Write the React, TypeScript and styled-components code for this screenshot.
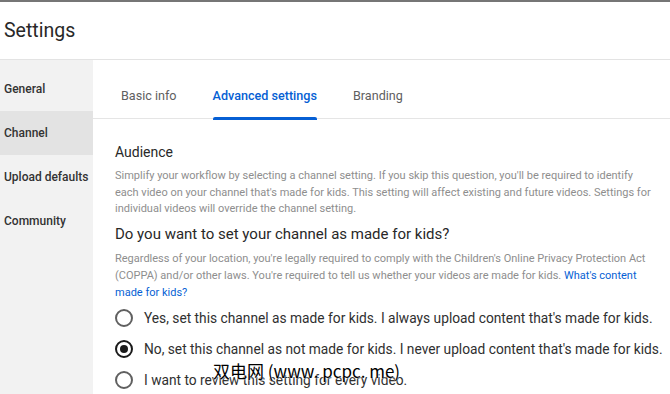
import React from "react";
import styled, { createGlobalStyle } from "styled-components";

const GlobalStyle = createGlobalStyle`
    html, body {
        margin: 0;
        padding: 0;
        background: #ffffff;
        overflow: hidden;
    }
    body {
        font-family: Roboto, "Liberation Sans", sans-serif;
        color: #282828;
    }
`;

const Page = styled.div`
    position: relative;
    width: 670px;
    height: 394px;
    border-top: 2px solid #767676;
    box-sizing: border-box;
    display: flex;
    flex-direction: column;
    overflow: hidden;
`;

const Header = styled.div`
    height: 58px;
    display: flex;
    align-items: center;
    padding-left: 4px;
    border-bottom: 1px solid #e3e3e3;
    font-size: 19.5px;
    color: #282828;
    box-sizing: border-box;
`;

const Body = styled.div`
    flex: 1;
    display: flex;
`;

const Sidebar = styled.nav`
    width: 93px;
    background: #f2f2f2;
    padding-top: 7px;
    display: flex;
    flex-direction: column;
`;

const NavItem = styled.div<{ $active?: boolean }>`
    height: 44px;
    display: flex;
    align-items: center;
    padding-left: 4px;
    font-size: 12px;
    font-weight: 500;
    color: #333333;
    background: ${(p) => (p.$active ? "#e3e3e3" : "transparent")};
`;

const Main = styled.div`
    flex: 1;
    display: flex;
    flex-direction: column;
`;

const Tabs = styled.div`
    display: flex;
    gap: 36px;
    padding-left: 28px;
    height: 59px;
    border-bottom: 1px solid #e5e5e5;
    box-sizing: border-box;
`;

const Tab = styled.div<{ $active?: boolean }>`
    position: relative;
    display: flex;
    align-items: center;
    padding-top: 11px;
    height: 48px;
    font-size: 12.6px;
    font-weight: ${(p) => (p.$active ? 500 : 400)};
    color: ${(p) => (p.$active ? "#065fd4" : "#606060")};

    &::after {
        content: "";
        display: ${(p) => (p.$active ? "block" : "none")};
        position: absolute;
        left: 0;
        right: 0;
        bottom: -1px;
        height: 3px;
        border-radius: 2px 2px 0 0;
        background: #065fd4;
    }
`;

const Content = styled.div`
    padding: 24px 0 0 22px;
    display: flex;
    flex-direction: column;
`;

const SectionTitle = styled.div`
    font-size: 14px;
    color: #282828;
    line-height: 18px;
`;

const Description = styled.p<{ $gap?: number }>`
    margin: ${(p) => p.$gap ?? 7}px 0 0;
    font-size: 11px;
    line-height: 16.7px;
    color: #8e8e8e;
    white-space: nowrap;
`;

const Question = styled.div`
    margin-top: 6px;
    font-size: 15px;
    line-height: 20px;
    color: #282828;
`;

const Link = styled.a`
    color: #065fd4;
    text-decoration: none;
`;

const Options = styled.div`
    margin-top: 7px;
    display: flex;
    flex-direction: column;
    gap: 11px;
`;

const Option = styled.label`
    display: flex;
    align-items: center;
    gap: 11px;
    height: 20px;
    font-size: 13.75px;
    white-space: nowrap;
    color: #303030;
`;

const Radio = styled.span<{ $checked?: boolean }>`
    width: 14px;
    height: 14px;
    border: 2px solid #606060;
    border-radius: 50%;
    display: flex;
    align-items: center;
    justify-content: center;
    flex-shrink: 0;
    border-color: ${(p) => (p.$checked ? "#1a1a1a" : "#606060")};

    &::after {
        content: "";
        display: ${(p) => (p.$checked ? "block" : "none")};
        width: 8px;
        height: 8px;
        border-radius: 50%;
        background: #1a1a1a;
    }
`;

const Watermark = styled.div`
    position: absolute;
    left: 213px;
    top: 356px;
    font-family: "Noto Sans CJK SC", "DejaVu Sans", sans-serif;
    font-size: 17px;
    color: #000000;
    white-space: pre;
    text-shadow: 0 0 2px #ffffff, 0 0 2px #ffffff;
`;

const navItems = ["General", "Channel", "Upload defaults", "Community"];
const tabs = ["Basic info", "Advanced settings", "Branding"];
const options = [
    { label: "Yes, set this channel as made for kids. I always upload content that's made for kids.", checked: false },
    { label: "No, set this channel as not made for kids. I never upload content that's made for kids.", checked: true },
    { label: "I want to review this setting for every video.", checked: false },
];

const App = () => (
    <>
        <GlobalStyle />
        <Page>
            <Header>Settings</Header>
            <Body>
                <Sidebar>
                    {navItems.map((item) => (
                        <NavItem key={item} $active={item === "Channel"}>
                            {item}
                        </NavItem>
                    ))}
                </Sidebar>
                <Main>
                    <Tabs>
                        {tabs.map((tab) => (
                            <Tab key={tab} $active={tab === "Advanced settings"}>
                                {tab}
                            </Tab>
                        ))}
                    </Tabs>
                    <Content>
                        <SectionTitle>Audience</SectionTitle>
                        <Description>
                            Simplify your workflow by selecting a channel setting. If you skip this question, you'll be required to identify
                            <br />
                            each video on your channel that's made for kids. This setting will affect existing and future videos. Settings for
                            <br />
                            individual videos will override the channel setting.
                        </Description>
                        <Question>Do you want to set your channel as made for kids?</Question>
                        <Description>
                            Regardless of your location, you're legally required to comply with the Children's Online Privacy Protection Act
                            <br />
                            (COPPA) and/or other laws. You're required to tell us whether your videos are made for kids.{" "}
                            <Link>What's content</Link>
                            <br />
                            <Link>made for kids?</Link>
                        </Description>
                        <Options>
                            {options.map((o) => (
                                <Option key={o.label}>
                                    <Radio $checked={o.checked} />
                                    {o.label}
                                </Option>
                            ))}
                        </Options>
                    </Content>
                </Main>
            </Body>
            <Watermark>双电网 (www. pcpc. me)</Watermark>
        </Page>
    </>
);

export default App;
